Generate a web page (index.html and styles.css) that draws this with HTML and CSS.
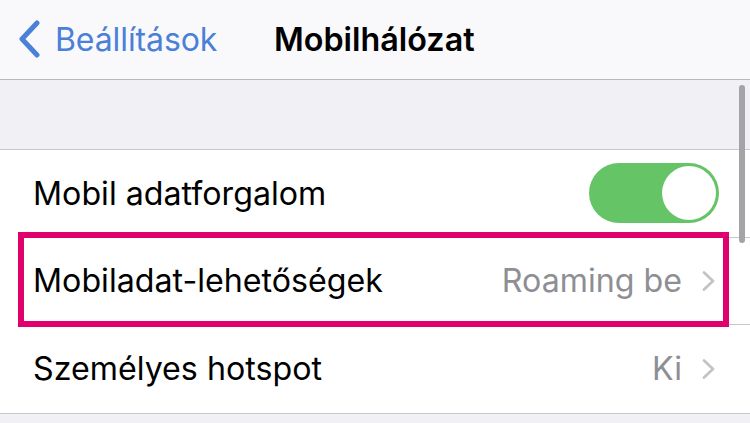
FILE: index.html
```html
<!DOCTYPE html>
<html lang="hu">
<head>
<meta charset="utf-8">
<link rel="stylesheet" href="styles.css">
</head>
<body>
<div class="screen">
  <header class="nav">
    <div class="back">
      <svg class="back-chev" width="24" height="38" viewBox="0 0 24 38"><path d="M20 3 L5 19 L20 35" fill="none" stroke="#4a80d8" stroke-width="5" stroke-linecap="round" stroke-linejoin="round"/></svg>
      <span class="back-label">Beállítások</span>
    </div>
    <div class="title">Mobilhálózat</div>
  </header>
  <div class="gap"></div>
  <section class="group">
    <div class="row">
      <span class="label">Mobil adatforgalom</span>
      <span class="toggle"><span class="knob"></span></span>
    </div>
    <div class="row">
      <span class="label">Mobiladat-lehetőségek</span>
      <span class="value">Roaming be</span>
      <svg class="chev" width="16" height="22" viewBox="0 0 16 22"><path d="M3 2.5 L12 11 L3 19.5" fill="none" stroke="#c4c4c7" stroke-width="2.8" stroke-linecap="round" stroke-linejoin="round"/></svg>
    </div>
    <div class="row">
      <span class="label">Személyes hotspot</span>
      <span class="value">Ki</span>
      <svg class="chev" width="16" height="22" viewBox="0 0 16 22"><path d="M3 2.5 L12 11 L3 19.5" fill="none" stroke="#c4c4c7" stroke-width="2.8" stroke-linecap="round" stroke-linejoin="round"/></svg>
    </div>
  </section>
  <div class="highlight"></div>
  <div class="scrollbar"></div>
</div>
</body>
</html>
```
FILE: styles.css
```css
* { box-sizing: border-box; }
html, body { margin: 0; padding: 0; }
body {
  width: 750px;
  height: 423px;
  overflow: hidden;
  background: #f0f0f5;
  font-family: "Inter", "Liberation Sans", sans-serif;
}
.screen {
  position: relative;
  width: 750px;
  height: 423px;
}
.nav {
  height: 80px;
  background: #f9f9fb;
  border-bottom: 1.5px solid #b9b9bd;
  display: flex;
  align-items: center;
  padding-left: 17px;
}
.back {
  display: flex;
  align-items: center;
  gap: 14px;
  width: 257px;
}
.back-chev { display: block; margin-top: -2px; }
.back-label {
  color: #4a80d8;
  font-size: 32px;
  letter-spacing: -0.1px;
}
.title {
  font-size: 32.3px;
  font-weight: 600;
  color: #000;
  letter-spacing: 0;
}
.gap {
  height: 70px;
  border-bottom: 1.5px solid #c8c8cc;
}
.group {
  background: #fff;
  border-bottom: 1.5px solid #c8c8cc;
  padding-left: 33px;
}
.row {
  height: 87.5px;
  display: flex;
  align-items: center;
  padding-right: 33px;
  border-bottom: 1.5px solid #c8c8cc;
}
.row:last-child { border-bottom: none; }
.label {
  flex: 1;
  font-size: 32.2px;
  color: #000;
  letter-spacing: 0;
}
.value {
  font-size: 32.2px;
  color: #8e8e93;
  letter-spacing: 0;
  margin-right: 19px;
}
.chev { display: block; }
.toggle {
  width: 130px;
  height: 60px;
  border-radius: 30px;
  background: #65c466;
  position: relative;
  margin-right: -2px;
}
.knob {
  position: absolute;
  right: 3px;
  top: 3px;
  width: 54px;
  height: 54px;
  border-radius: 50%;
  background: #fff;
}
.highlight {
  position: absolute;
  left: 18px;
  top: 232px;
  width: 711px;
  height: 95px;
  border: 6px solid #e0006e;
}
.scrollbar {
  position: absolute;
  left: 739px;
  top: 85px;
  width: 6px;
  height: 158px;
  border-radius: 3px;
  background: #a3a3a8;
}
```
